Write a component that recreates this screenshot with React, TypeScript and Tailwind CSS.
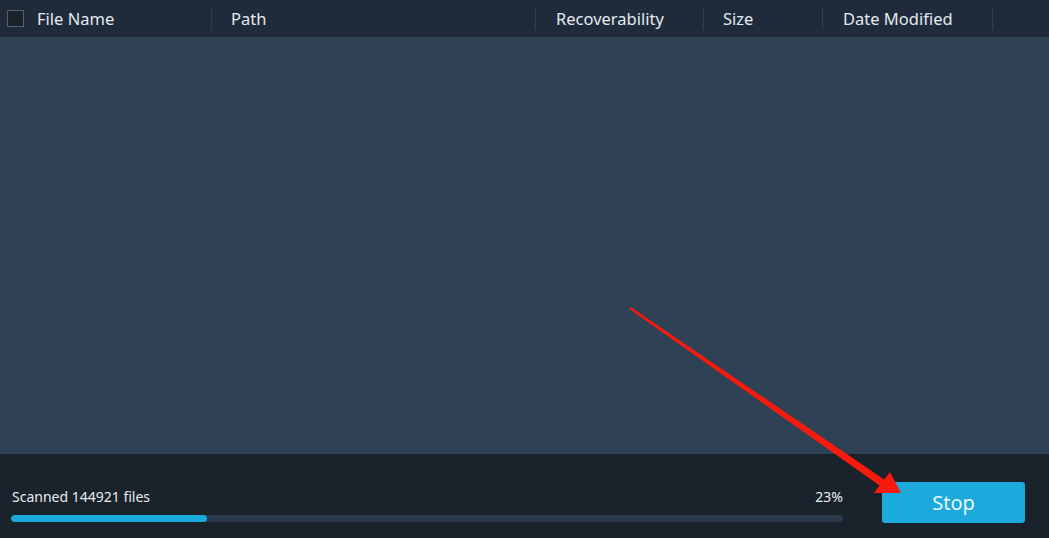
export default function App() {
  const progress = 23;

  return (
    <div
      className="relative w-[1049px] h-[538px] overflow-hidden flex flex-col bg-[#2e4155] text-[#dfe6ee]"
      style={{ fontFamily: '"Noto Sans", "Open Sans", sans-serif' }}
    >
      {/* table header */}
      <div className="h-[37px] flex items-center bg-[#1f2b3b] text-[16.5px] text-[#e3e9ef]">
        <div className="w-[211px] flex items-center">
          <div className="ml-[7px] w-[17px] h-[17px] border-[1.5px] border-[#55606c] bg-[#1a222b]" />
          <span className="ml-[13px] pt-[2px]">File Name</span>
        </div>
        <div className="w-px h-[22px] bg-[#2f3e50]" />
        <div className="w-[323px] pl-[19px] pt-[2px]">Path</div>
        <div className="w-px h-[22px] bg-[#2f3e50]" />
        <div className="w-[167px] pl-[20px] pt-[2px]">Recoverability</div>
        <div className="w-px h-[22px] bg-[#2f3e50]" />
        <div className="w-[118px] pl-[19px] pt-[2px]">Size</div>
        <div className="w-px h-[22px] bg-[#2f3e50]" />
        <div className="w-[169px] pl-[20px] pt-[2px]">Date Modified</div>
        <div className="w-px h-[22px] bg-[#2f3e50]" />
      </div>

      {/* empty list area */}
      <div className="flex-1" />

      {/* footer */}
      <div className="h-[84px] bg-[#1a222b] flex items-start pt-[28px] pl-[11px]">
        <div className="w-[832px] flex flex-col">
          <div className="flex justify-between items-center h-[28px] text-[14px] text-[#e8edf2]">
            <span className="pl-[1px]">Scanned 144921 files</span>
            <span>{progress}%</span>
          </div>
          <div className="mt-[5px] h-[7px] rounded-full bg-[#2b3a4b] overflow-hidden">
            <div className="h-full rounded-full bg-[#1ba8dc]" style={{ width: "196px" }} />
          </div>
        </div>
        <button className="ml-[39px] w-[143px] h-[41px] rounded-[3px] bg-[#1caadd] text-[20px] text-[#e9f6fc]">
          Stop
        </button>
      </div>

      {/* red annotation arrow */}
      <svg className="absolute inset-0 pointer-events-none" width="1049" height="538">
        <polygon
          points="630.6,307 884.2,479.4 890,472 901,493 874,493 879.6,485.6 629.4,309"
          fill="#f81a0d"
        />
      </svg>
    </div>
  );
}
